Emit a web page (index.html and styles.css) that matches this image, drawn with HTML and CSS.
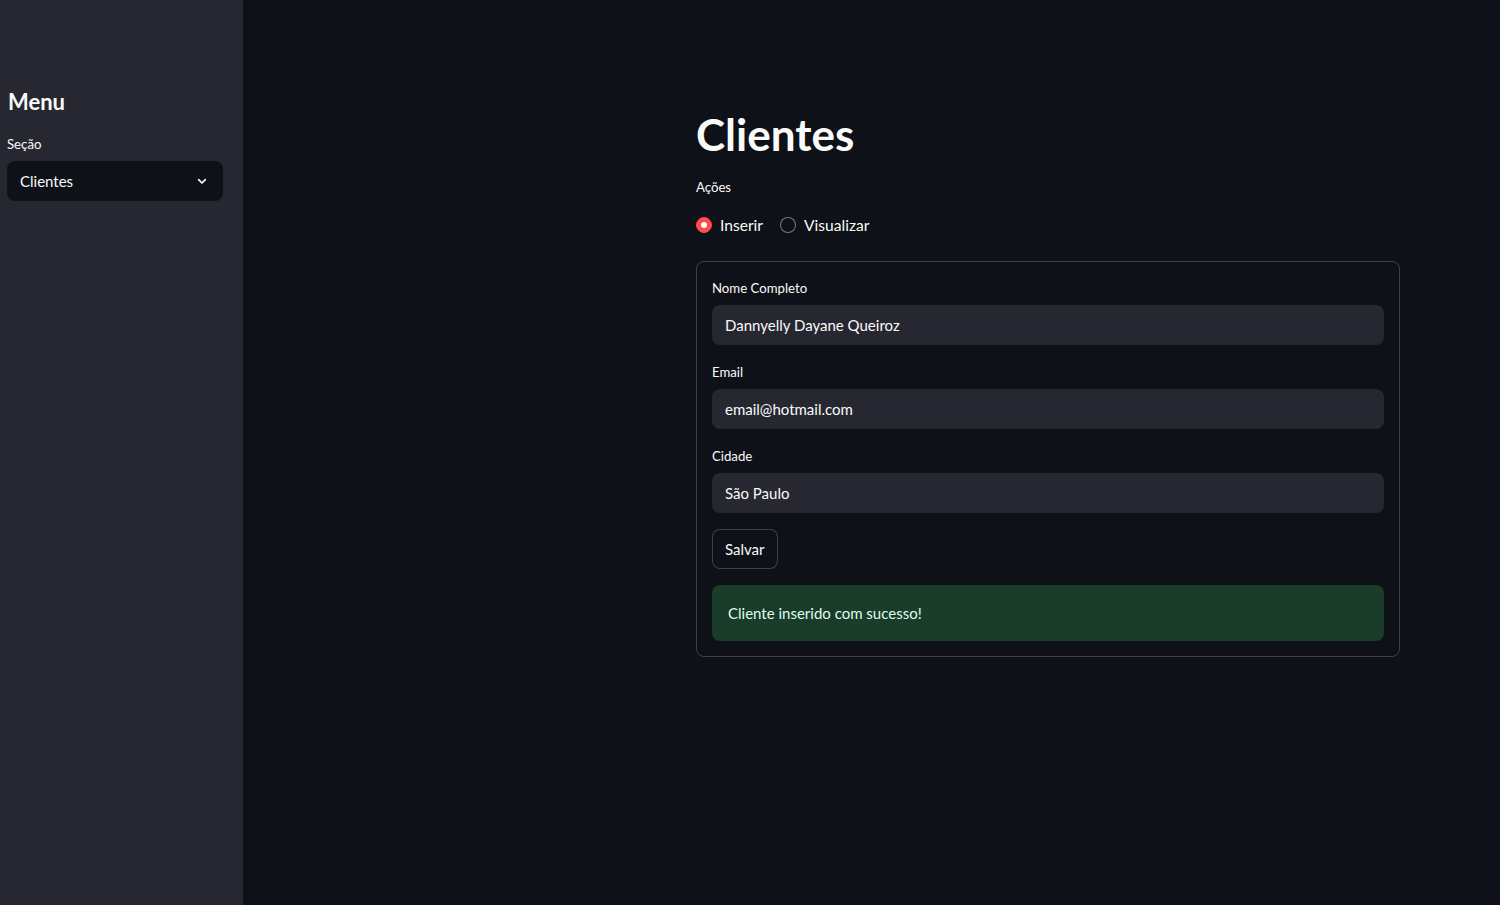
FILE: index.html
```html
<!DOCTYPE html>
<html lang="pt">
<head>
<meta charset="utf-8">
<title>Clientes</title>
<link rel="stylesheet" href="styles.css">
</head>
<body>
<div class="app">
  <aside class="sidebar">
    <h2 class="side-title">Menu</h2>
    <div class="field">
      <label class="label">Seção</label>
      <div class="select">
        <span>Clientes</span>
        <svg class="chev" width="16" height="16" viewBox="0 0 24 24"><path d="M7 10l5 5 5-5" fill="none" stroke="#fafafa" stroke-width="2.6" stroke-linecap="round" stroke-linejoin="round"/></svg>
      </div>
    </div>
  </aside>
  <main class="main">
    <div class="block">
      <h1 class="title">Clientes</h1>
      <div class="field">
        <label class="label">Ações</label>
        <div class="radios">
          <div class="radio"><span class="dot on"></span><span>Inserir</span></div>
          <div class="radio"><span class="dot"></span><span>Visualizar</span></div>
        </div>
      </div>
      <form class="form">
        <div class="field">
          <label class="label">Nome Completo</label>
          <div class="input">Dannyelly Dayane Queiroz</div>
        </div>
        <div class="field">
          <label class="label">Email</label>
          <div class="input">email@hotmail.com</div>
        </div>
        <div class="field">
          <label class="label">Cidade</label>
          <div class="input">São Paulo</div>
        </div>
        <div class="btn-row"><button type="button" class="btn">Salvar</button></div>
        <div class="alert">Cliente inserido com sucesso!</div>
      </form>
    </div>
  </main>
</div>
</body>
</html>
```
FILE: styles.css
```css
* { box-sizing: border-box; }
html, body { margin: 0; padding: 0; }
body {
  background: #0e1117;
  color: #fafafa;
  font-family: "Lato", "Noto Sans", sans-serif;
  font-size: 15px;
}
.app {
  display: flex;
  height: 905px;
}
.sidebar {
  width: 243px;
  flex: 0 0 243px;
  background: #262730;
  padding: 84px 20px 0 7px;
}
.side-title {
  margin: 0 0 13px 1px;
  font-size: 22px;
  font-weight: 700;
  line-height: 36px;
}
.field {
  display: flex;
  flex-direction: column;
}
.label {
  font-size: 13.2px;
  line-height: 22px;
  height: 24px;
  margin-bottom: 4px;
}
.select {
  height: 40px;
  background: #0e1117;
  border-radius: 8px;
  display: flex;
  align-items: center;
  justify-content: space-between;
  padding: 0 13px 0 13px;
}
.chev { display: block; }
.main {
  flex: 1;
  padding: 96px 0 0 453px;
}
.block {
  width: 704px;
  display: flex;
  flex-direction: column;
}
.title {
  margin: 0;
  padding: 10px 0 14px;
  font-size: 44px;
  font-weight: 700;
  line-height: 56px;
}
.radios {
  display: flex;
  gap: 17px;
  height: 28px;
  align-items: center;
  margin-top: 7px;
  margin-bottom: 22px;
  font-size: 15.6px;
}
.radio {
  display: flex;
  align-items: center;
  gap: 8px;
}
.dot {
  width: 16px;
  height: 16px;
  border-radius: 50%;
  border: 1px solid rgba(250,250,250,0.45);
  background: #0e1117;
  position: relative;
}
.dot.on {
  background: #ff4b4b;
  border-color: #ff4b4b;
}
.dot.on::after {
  content: "";
  position: absolute;
  left: 4px;
  top: 4px;
  width: 6px;
  height: 6px;
  border-radius: 50%;
  background: #fff;
}
.form {
  margin: 0;
  border: 1px solid rgba(250,250,250,0.2);
  border-radius: 8px;
  padding: 15px;
  display: flex;
  flex-direction: column;
  gap: 16px;
}
.input {
  height: 40px;
  background: #262730;
  border-radius: 8px;
  display: flex;
  align-items: center;
  padding: 0 13px;
}
.btn-row { display: flex; }
.btn {
  height: 40px;
  padding: 0 12px;
  background: #0e1117;
  color: #fafafa;
  border: 1px solid rgba(250,250,250,0.2);
  border-radius: 8px;
  font: inherit;
}
.alert {
  height: 56px;
  background: #1a3c2a;
  color: #dffde9;
  border-radius: 8px;
  padding: 0 16px;
  display: flex;
  align-items: center;
}
```
